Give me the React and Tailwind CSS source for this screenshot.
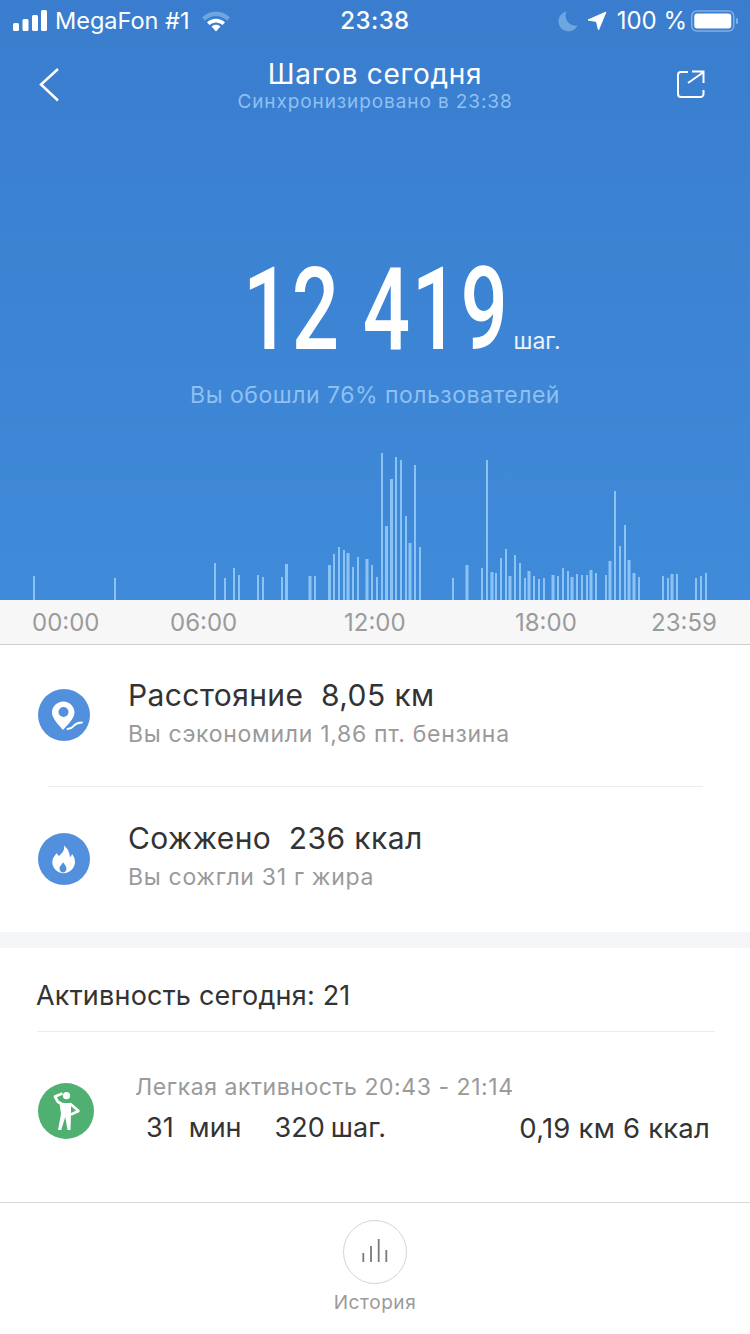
const BARS = [
[34,24],[115,22],[215,37],[225,22],[234,32],[239,25],[258,25],[263,23],[282,23],[286.5,36,3],[310,24,3],[315,24],[329.5,35,3],[334,46],[339,53],[344,50],[348,47,3],[353,33],[358,43],[367,41,3],[372,35],
[377,23],[382,147],[386.5,74,3],[391.5,121,3],[396,143],[401,140],[406,84],[410,57,3],[415,135],[420,53],[453,22],[467,35,3],[482,32],[487,140],[492,28,3],[496,27],[501,42],[506,51],[510,24,3],[515,45],[520,37],[525,22],[529,29,3],[534,24],[539,21],[544,22],[553,25,3],[558,24],[563,32],[568,29],[572,23,3],[577,26],[582,25],[587,25],[591,30,3],[596,27],[606,25],[610,39,3],[615,109],[620,54],[625,75],[629,40,3],[634,27,3],[639,23],[663,24],[668,22],[672,26,3],[677,26],[696,22],[701,24],[706,27],
];

function Chart() {
  return (
    <svg width="750" height="150" viewBox="0 450 750 150" className="block">
      {BARS.map(([x, h, w = 2], i) => (
        <rect key={i} x={x - w / 2} y={600 - h} width={w} height={h} fill="#8cc3f5" />
      ))}
    </svg>
  );
}

function Signal() {
  return (
    <svg width="36" height="22" viewBox="0 0 36 22">
      <rect x="0" y="13" width="6" height="8" rx="1.5" fill="#fff" />
      <rect x="9.5" y="9" width="6" height="12" rx="1.5" fill="#fff" />
      <rect x="19" y="5" width="6" height="16" rx="1.5" fill="#fff" />
      <rect x="28" y="0" width="6" height="21" rx="1.5" fill="#fff" />
    </svg>
  );
}

function Wifi() {
  return (
    <svg width="30" height="22" viewBox="0 0 30 22">
      <path d="M1 7.5C9-.5 21-.5 29 7.5l-3 3C19.500 4.500 10.500 4.500 4 10.500z" fill="#6ea6e2" />
      <path d="M6 12.500C11 7.500 19 7.500 24 12.500l-2.500 2.600C17.500 11.500 12.500 11.500 8.500 15.100z" fill="#fff" />
      <path d="M10.500 16.500c2.500-2.300 6.500-2.300 9 0L15 21.500z" fill="#fff" />
    </svg>
  );
}

function Moon() {
  return (
    <svg width="20" height="22" viewBox="0 0 20 22">
      <path d="M8.500 1.500A10 10 0 1 0 19.500 15.500A10 10 0 0 1 8.500 1.500z" fill="#6ea6e2" />
    </svg>
  );
}

function Arrow() {
  return (
    <svg width="20" height="20" viewBox="0 0 20 20">
      <path d="M19 1 L11.500 19 L9.500 10.500 L1 9z" fill="#fff" stroke="#fff" strokeWidth="1" strokeLinejoin="round" />
    </svg>
  );
}

function Battery() {
  return (
    <svg width="47" height="24" viewBox="0 0 47 24">
      <rect x="0.750" y="2" width="42" height="20" rx="5" fill="none" stroke="#7fb0e6" strokeWidth="1.500" />
      <rect x="3.250" y="4.500" width="37" height="15" rx="3" fill="#fff" />
      <rect x="45" y="9" width="2" height="6" rx="1" fill="#7fb0e6" />
    </svg>
  );
}

function Pin() {
  return (
    <svg width="52" height="52" viewBox="0 0 52 52" className="shrink-0">
      <circle cx="26" cy="26" r="26" fill="#5290dd" />
      <path fillRule="evenodd" d="M25.500 12.500c-6.500 0-11.500 5-11.500 11 0 6.500 7.500 13 11 17.500 3.500-4.500 11.500-11 11.500-17.500 0-6-5-11-11-11zm0 5.500a5 5 0 1 1 0 10 5 5 0 0 1 0-10z" fill="#fff" />
      <path d="M29.500 40.500c3 0 4.500-1 6.500-3.500 2-2 5-3 8-3" fill="none" stroke="#5290dd" strokeWidth="5.500" />
      <path d="M29.500 40c3 0 4.500-1 6.500-3.500 2-2 5-3 8-3" fill="none" stroke="#fff" strokeWidth="1.800" strokeLinecap="round" />
    </svg>
  );
}

function Flame() {
  return (
    <svg width="52" height="52" viewBox="0 0 52 52" className="shrink-0">
      <circle cx="26" cy="26" r="26" fill="#5290dd" />
      <path fillRule="evenodd" d="M26 12.500c1 5-2 7.500-5 10.500-1.200-.8-1.800-1.800-2-3-3 3-4.700 6-4.700 9 0 6 5 11.200 11.200 11.200S37 35 37 29c0-3.500-1.500-6-3-8-.5 1.500-1 2.500-2 3-.5-5-2.500-9-6-11.500zM25 29c.8 2.300 3.500 3.700 3.500 6.500 0 2-1.500 4-3.500 4s-3.500-2-3.500-4c0-2.800 2.700-3.700 3.500-6.500z" fill="#fff" />
    </svg>
  );
}

function Person() {
  return (
    <svg width="56" height="56" viewBox="0 0 56 56" className="shrink-0">
      <circle cx="28" cy="28" r="28" fill="#4fb071" />
      <circle cx="28.500" cy="12.700" r="3.600" fill="#fff" />
      <path d="M24.500 10.500 L17 13.500 L20 19 L24 21" fill="none" stroke="#fff" strokeWidth="2.800" strokeLinejoin="round" />
      <path d="M21.500 20h11.500v11l-.5 16h-3l-2.300-13-4 13h-3.200l3-16z" fill="#fff" />
      <path d="M32 20.500 L40.500 28 L33 31.500" fill="none" stroke="#fff" strokeWidth="2.500" strokeLinejoin="round" />
    </svg>
  );
}

function Bars() {
  return (
    <svg width="30" height="26" viewBox="0 0 30 26" className="mb-[3px]">
      <path d="M3.300 15v9M11 8v16M18.700 1v23M26.300 12v12" stroke="#7a7a7a" strokeWidth="1.800" fill="none" />
    </svg>
  );
}

export default function App() {
  return (
    <div className="w-[750px] h-[1334px] bg-white flex flex-col overflow-hidden font-['Inter','Noto_Sans',sans-serif]">
      <div className="h-[600px] shrink-0 flex flex-col bg-gradient-to-b from-[#3a7dce] to-[#3f8bd9] text-white">
        <div className="h-[42px] shrink-0 relative flex items-center justify-between pl-[13px] pr-[12px]">
          <div className="flex items-center">
            <Signal />
            <span className="ml-[6px] text-[23.5px] leading-none">MegaFon #1</span>
            <span className="ml-[11px]"><Wifi /></span>
          </div>
          <span className="absolute left-0 right-0 text-center text-[24px] font-medium leading-none tracking-[0.4px]">23:38</span>
          <div className="flex items-center">
            <Moon />
            <span className="ml-[9px]"><Arrow /></span>
            <span className="ml-[10px] text-[24px] leading-none">100 %</span>
            <span className="ml-[4px]"><Battery /></span>
          </div>
        </div>
        <div className="h-[78px] shrink-0 flex items-start pl-[39px] pr-[45px]">
          <div className="w-[80px] shrink-0">
            <svg width="22" height="36" viewBox="0 0 22 36" className="mt-[25px]">
              <path d="M19 2 L2 17.500 L19 33.500" fill="none" stroke="#fff" strokeWidth="2.500" />
            </svg>
          </div>
          <div className="grow flex flex-col items-center pt-[15px]">
            <span className="text-[28px] leading-[34px] tracking-[0.7px]">Шагов сегодня</span>
            <span className="text-[19px] leading-[22px] tracking-[0.9px] text-[#8fc0f2]">Синхронизировано в 23:38</span>
          </div>
          <div className="w-[74px] shrink-0 flex justify-end">
            <svg width="30" height="30" viewBox="0 0 30 30" className="mt-[27px]">
              <path d="M13 3H6a3 3 0 0 0-3 3v19a3 3 0 0 0 3 3h19.500a3 3 0 0 0 3-3v-4M13 14 L28 3.500M17 2.500h11.500v11.500" fill="none" stroke="#fff" strokeWidth="2" />
            </svg>
          </div>
        </div>
        <div className="h-[0px] grow flex flex-col">
          <div className="mt-[140px] h-[100px] flex items-end justify-center pl-[54px]">
            <span className="w-[258px] shrink-0 text-[115px] leading-[100px] font-medium font-['Roboto',sans-serif] tracking-[2px] scale-x-[0.725] origin-left whitespace-nowrap">12 419</span>
            <span className="ml-[12px] mb-[7px] text-[23px] leading-[24px] text-white/90">шаг.</span>
          </div>
          <div className="mt-[20px] text-center text-[23px] leading-[30px] tracking-[0.5px] text-[#8fc0f2]">Вы обошли 76% пользователей</div>
          <div className="mt-auto"><Chart /></div>
        </div>
      </div>

      <div className="h-[45px] shrink-0 bg-[#f7f7f7] border-b border-[#cfcfcf] relative text-[24px] leading-[45px] text-[#9b9b9b] flex">
        <span className="w-[133px] pl-[32px]">00:00</span>
        <span className="w-[174px] pl-[37px]">06:00</span>
        <span className="w-[171px] pl-[37px]">12:00</span>
        <span className="w-[136px] pl-[37px]">18:00</span>
        <span className="pl-[37px]">23:59</span>
      </div>

      <div className="h-[287px] shrink-0 flex flex-col">
        <div className="h-[141px] flex items-center pl-[38px] pb-[2px]">
          <Pin />
          <div className="ml-[38px] mb-[4px] flex flex-col">
            <span className="text-[30px] leading-[36px] tracking-[0.4px] text-[#333] whitespace-pre">Расстояние  8,05 км</span>
            <span className="mt-[7px] text-[23px] leading-[28px] tracking-[0.7px] text-[#9a9a9a]">Вы сэкономили 1,86 пт. бензина</span>
          </div>
        </div>
        <div className="ml-[48px] mr-[47px] border-t border-[#ececec]" />
        <div className="h-[145px] flex items-center pl-[38px] pb-[2px]">
          <Flame />
          <div className="ml-[38px] mb-[6px] flex flex-col">
            <span className="text-[30px] leading-[36px] tracking-[0.4px] text-[#333] whitespace-pre">Сожжено  236 ккал</span>
            <span className="mt-[7px] text-[23px] leading-[28px] tracking-[0.7px] text-[#9a9a9a]">Вы сожгли 31 г жира</span>
          </div>
        </div>
      </div>

      <div className="h-[16px] shrink-0 bg-[#f5f6f7]" />

      <div className="h-[254px] shrink-0 flex flex-col pl-[37px] pr-[35px]">
        <div className="h-[84px] pt-[13px] flex items-center border-b border-[#ececec] text-[27px] tracking-[0.2px] text-[#333]">
          <span className="-ml-[1px]">Активность сегодня: 21</span>
        </div>
        <div className="flex items-start pt-[41px]">
          <div className="mt-[10px] ml-[1px]"><Person /></div>
          <div className="ml-[41px] grow flex flex-col">
            <span className="text-[23px] leading-[28px] text-[#9a9a9a] tracking-[0.55px]">Легкая активность 20:43 - 21:14</span>
            <div className="mt-[9px] flex text-[27px] leading-[36px] text-[#333] ml-[11px] mr-[5px] whitespace-pre">
              <span>31  мин</span>
              <span className="ml-[33px]">320</span>
              <span className="ml-[6px]">шаг.</span>
              <span className="ml-auto text-[27.5px] tracking-[0.2px]">0,19 км 6 ккал</span>
            </div>
          </div>
        </div>
      </div>

      <div className="grow border-t border-[#d8d8d8] flex flex-col items-center pt-[17px]">
        <div className="w-[64px] h-[64px] rounded-full border border-[#d5d5d5] flex items-center justify-center">
          <Bars />
        </div>
        <span className="mt-[6px] text-[19px] leading-[26px] text-[#9a9a9a] tracking-[0.6px]">История</span>
      </div>
    </div>
  );
}
